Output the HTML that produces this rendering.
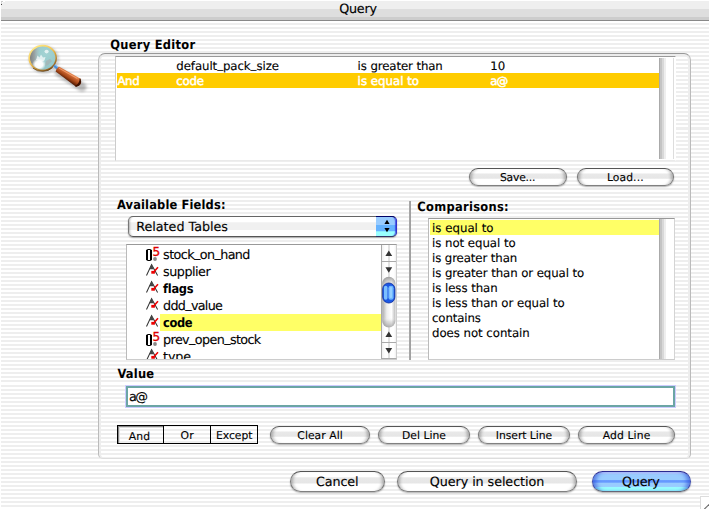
<!DOCTYPE html>
<html><head><meta charset="utf-8"><title>Query</title>
<style>
html,body{margin:0;padding:0;background:#fff;}
body{width:710px;height:509px;position:relative;overflow:hidden;font-family:"DejaVu Sans", "Liberation Sans", sans-serif;}
#win{position:absolute;left:1px;top:1px;width:708px;height:508px;background:#fff;}
.ps{position:absolute;left:1px;width:708px;background-image:linear-gradient(to bottom,#eee 0,#eee 50%,#fff 50%,#fff 100%);background-size:100% 4px;}
#tb{position:absolute;left:1px;top:1px;width:708px;height:19px;background:linear-gradient(to bottom,#efefef 0,#efefef 8px,#dedede 8px,#dedede 16px,#cdcdcd 16px,#cdcdcd 19px);border-bottom:1px solid #888;}
.t{position:absolute;white-space:pre;line-height:1;color:#000;text-rendering:geometricPrecision;-webkit-text-stroke:0.12px currentColor;font-family:"DejaVu Sans", "Liberation Sans", sans-serif;}
.t.b{font-family:"DejaVu Sans Condensed", "DejaVu Sans", "Liberation Sans", sans-serif;font-weight:bold;-webkit-text-stroke-width:0;}
.u{position:relative;top:-0.15em;}
.abs{position:absolute;}
#grp{position:absolute;left:98px;top:53px;width:593px;height:406px;box-sizing:border-box;border:1px solid #bbb;border-top-color:#999;border-bottom-color:#ccc;border-bottom-color:#ddd;border-radius:7px 7px 5px 5px;box-shadow:inset 2px 0 0 #ededed, inset -2px 0 0 #ededed, inset 0 2px 0 #ececec, inset 0 -1px 0 #f0f0f0;}
.list{position:absolute;box-sizing:border-box;background:#fff;border:1px solid #ccc;border-top-color:#999;overflow:hidden;}
.track{position:absolute;background:linear-gradient(to right,#aaa 0,#aaa 1px,#c4c4c4 1px,#c4c4c4 3px,#d8d8d8 3px,#d8d8d8 5px,#eee 5px,#eee 7px,#fff 7px);}
.btn{position:absolute;box-sizing:border-box;border:1px solid #777;border-top-color:#555;border-bottom-color:#808080;border-radius:11px;
 background:linear-gradient(to bottom,#fff 0,#fff 26%,#e9e9e9 30%,#e6e6e6 58%,#fff 63%,#fff 100%);
 box-shadow:0 1px 1.5px rgba(0,0,0,.3), inset 4px 0 3px -2px rgba(0,0,0,.25), inset -4px 0 3px -2px rgba(0,0,0,.25);}
.btn.def{border-color:#3a4ab0;border-top-color:#2a2a90;border-bottom-color:#667;background:linear-gradient(to bottom,#c6d2ff 0,#b0ccff 8%,#99ccff 14%,#99ccff 42%,#6699ff 45%,#6699ff 54%,#99ccff 58%,#99ccff 76%,#99ffff 82%,#99ffff 100%);
 box-shadow:0 1px 1.5px rgba(0,0,0,.3), inset 5px 0 4px -2px rgba(40,70,210,.6), inset -5px 0 4px -2px rgba(40,70,210,.6);}
.ic{position:absolute;overflow:visible;}
.seg{position:absolute;top:425px;height:19px;box-sizing:border-box;border:1px solid #000;}
</style></head>
<body>
<div id="win"></div>
<div class="ps" style="top:1px;height:128px;background-position:0 2px"></div>
<div class="ps" style="top:129px;height:1px;background:#eee"></div>
<div class="ps" style="top:130px;height:254px;background-position:0 2px"></div>
<div class="ps" style="top:384px;height:125px;background-position:0 1px"></div>
<div id="tb"></div>
<div class="abs" style="left:1px;top:1px;width:2px;height:1px;background:#ccc"></div>
<div class="abs" style="left:3px;top:1px;width:2px;height:1px;background:#fff"></div>
<div class="abs" style="left:1px;top:2px;width:1px;height:2px;background:#d8d8d8"></div>
<div class="abs" style="left:2px;top:2px;width:1px;height:1px;background:#fff"></div>
<div class="abs" style="left:1px;top:4px;width:1px;height:1px;background:#444"></div>

<!-- magnifier -->
<svg class="abs" style="left:20px;top:36px" width="70" height="60" viewBox="20 36 70 60">
<defs>
<radialGradient id="gl" cx="0.62" cy="0.32" r="0.8"><stop offset="0" stop-color="#a3d3d3"/><stop offset="0.7" stop-color="#94c8ca"/><stop offset="1" stop-color="#9bb"/></radialGradient>
<radialGradient id="hl" cx="0.5" cy="0.5" r="0.5"><stop offset="0" stop-color="#fff"/><stop offset="0.55" stop-color="#fff" stop-opacity="0.95"/><stop offset="1" stop-color="#fff" stop-opacity="0"/></radialGradient>
<linearGradient id="gy" x1="0" y1="0" x2="1" y2="0"><stop offset="0" stop-color="#777"/><stop offset="0.5" stop-color="#999" stop-opacity="0.8"/><stop offset="1" stop-color="#bbb" stop-opacity="0"/></linearGradient>
<linearGradient id="rim" x1="0.2" y1="0.05" x2="0.8" y2="0.95"><stop offset="0" stop-color="#ffe880"/><stop offset="0.45" stop-color="#f0c050"/><stop offset="1" stop-color="#8a5a20"/></linearGradient>
<linearGradient id="hd" x1="0" y1="0" x2="0" y2="1"><stop offset="0" stop-color="#e88a50"/><stop offset="0.25" stop-color="#d06c38"/><stop offset="0.6" stop-color="#a84818"/><stop offset="1" stop-color="#4a1602"/></linearGradient>
<filter id="bl" x="-30%" y="-30%" width="160%" height="160%"><feGaussianBlur stdDeviation="1.4"/></filter>
<clipPath id="lc"><ellipse cx="42.7" cy="58.1" rx="13" ry="12"/></clipPath>
</defs>
<g filter="url(#bl)" opacity="0.26"><ellipse cx="44" cy="59.6" rx="13.4" ry="12.3" fill="none" stroke="#000" stroke-width="2.5"/><path d="M59 72 L82 87" stroke="#000" stroke-width="9" stroke-linecap="round"/></g>
<ellipse cx="42.7" cy="58.1" rx="13" ry="12" fill="url(#gl)"/>
<g clip-path="url(#lc)">
<rect x="29" y="44" width="11" height="28" fill="url(#gy)"/>
<ellipse cx="39" cy="64.4" rx="7" ry="6" fill="url(#hl)"/>
<path d="M36 60 L37.5 55.5 L39.5 57.5 L41 54.5 L43 57.5 L45.5 57 L44.5 60.5 L41 62 Z" fill="#fff" opacity="0.7"/>
<ellipse cx="46.6" cy="51.6" rx="2.1" ry="1.8" fill="#fff" opacity="0.7"/>
<path d="M46 61 L50 59 L52 61 L48 65 L45 66 Z" fill="#aaa" opacity="0.55"/>
</g>
<ellipse cx="42.7" cy="58.1" rx="13.5" ry="12.45" fill="none" stroke="url(#rim)" stroke-width="1.6"/>
<path d="M33 68.2 A14.3 13.2 0 0 0 52.5 67.6" fill="none" stroke="#5a3a10" stroke-width="0.9" opacity="0.75"/>
<path d="M54.2 65.3 L58.8 69.5" stroke="#4a8fd8" stroke-width="3"/>
<path d="M54.9 64.5 L59.5 68.7" stroke="#a4ccf4" stroke-width="1"/>
<g transform="translate(57.3,69.0) rotate(32.6)"><path d="M0 -2.9 L24.8 -4.4 Q30.3 0 25.3 4.8 L0 3.1 Q-1 0 0 -2.9 Z" fill="url(#hd)"/><path d="M23.8 -4.3 Q26.6 0 24 4.7 L25.3 4.8 Q30.3 0 24.8 -4.4 Z" fill="#3e1202"/><path d="M1 -1.6 L22 -2.8" stroke="#ffb080" stroke-width="0.9" opacity="0.7"/></g>
</svg>

<div id="grp"></div>

<!-- top list -->
<div class="list" style="left:115px;top:56px;width:561px;height:105px;border-bottom-color:#eaeaea;border-right-color:#fff"></div>
<div class="abs" style="left:117px;top:73px;width:542px;height:15px;background:#ffcc00"></div>
<div class="track" style="left:659px;top:58px;width:14px;height:101px"></div>
<div class="abs" style="left:673px;top:58px;width:1px;height:101px;background:#ddd"></div>
<div class="btn " style="left:469px;top:168px;width:98px;height:18px"></div>
<div class="btn " style="left:577px;top:168px;width:97px;height:18px"></div>

<!-- popup -->
<div class="abs" id="pop" style="left:128px;top:216px;width:269px;height:21px;box-sizing:border-box;border:1px solid #777;border-top-color:#666;border-bottom-color:#555;border-radius:5px;background:linear-gradient(to bottom,#fff 0,#fff 26%,#f0f0f0 30%,#f0f0f0 66%,#fff 70%,#fff 100%);box-shadow:0 1px 1.5px rgba(0,0,0,.3), inset 3px 0 2px -2px rgba(0,0,0,.25);"></div>
<div class="abs" style="left:376px;top:216px;width:21px;height:21px;box-sizing:border-box;border:1px solid #33c;border-top-color:#006;border-left:0;border-bottom-color:#336;border-radius:0 5px 5px 0;background:linear-gradient(to bottom,#99ccff 0,#99ccff 42%,#66b3ff 44%,#66b3ff 72%,#99ffff 78%,#99ffff 100%);box-shadow:inset -2px 0 1px -1px rgba(40,40,220,.7)"></div>
<svg class="abs" style="left:376px;top:216px" width="21" height="21" viewBox="0 0 21 21"><path d="M11 3.8 L13.6 7.9 L8.4 7.9 Z M8.4 12.1 L13.6 12.1 L11 16.2 Z" fill="#000"/></svg>

<!-- fields list -->
<div class="list" style="left:126px;top:244px;width:271px;height:116px;border-left-color:#bbb;border-bottom-color:#ccc"></div>
<div class="abs" style="left:160px;top:314px;width:221px;height:17px;background:#ffff66"></div>
<div class="abs" style="left:127px;top:245px;width:254px;height:114px;overflow:hidden">
<div class="abs" style="left:-127px;top:-245px">
<svg class="ic" style="left:145px;top:246px" width="16" height="17" viewBox="0 0 16 17">
<rect x="1.5" y="3.5" width="5" height="11" rx="1.2" fill="none" stroke="#000" stroke-width="1"/>
<rect x="1" y="4" width="2" height="10" fill="#000"/><rect x="5" y="4" width="2" height="10" fill="#000"/>
<text x="7.4" y="9.6" font-family="DejaVu Sans, Liberation Sans, sans-serif" font-size="12" fill="#d00" stroke="#d00" stroke-width="0.35">5</text>
<circle cx="10" cy="13" r="1.9" fill="#888"/>
</svg>
<svg class="ic" style="left:145px;top:263px" width="16" height="17" viewBox="0 0 16 17">
<path d="M1.5 12.5 L6.6 1.6 L12.6 12.4" fill="none" stroke="#333" stroke-width="1.05" stroke-linejoin="miter"/>
<path d="M6.4 1.6 L4.4 6.2 L9.0 6.2 Z" fill="#444"/>
<rect x="6.3" y="7.9" width="3.6" height="2.8" fill="#e00"/>
<path d="M8 9.8 L13 4.3" stroke="#e00" stroke-width="1.6" fill="none"/>
</svg>
<svg class="ic" style="left:145px;top:280px" width="16" height="17" viewBox="0 0 16 17">
<path d="M1.5 12.5 L6.6 1.6 L12.6 12.4" fill="none" stroke="#333" stroke-width="1.05" stroke-linejoin="miter"/>
<path d="M6.4 1.6 L4.4 6.2 L9.0 6.2 Z" fill="#444"/>
<rect x="6.3" y="7.9" width="3.6" height="2.8" fill="#e00"/>
<path d="M8 9.8 L13 4.3" stroke="#e00" stroke-width="1.6" fill="none"/>
</svg>
<svg class="ic" style="left:145px;top:297px" width="16" height="17" viewBox="0 0 16 17">
<path d="M1.5 12.5 L6.6 1.6 L12.6 12.4" fill="none" stroke="#333" stroke-width="1.05" stroke-linejoin="miter"/>
<path d="M6.4 1.6 L4.4 6.2 L9.0 6.2 Z" fill="#444"/>
<rect x="6.3" y="7.9" width="3.6" height="2.8" fill="#e00"/>
<path d="M8 9.8 L13 4.3" stroke="#e00" stroke-width="1.6" fill="none"/>
</svg>
<svg class="ic" style="left:145px;top:314px" width="16" height="17" viewBox="0 0 16 17">
<path d="M1.5 12.5 L6.6 1.6 L12.6 12.4" fill="none" stroke="#333" stroke-width="1.05" stroke-linejoin="miter"/>
<path d="M6.4 1.6 L4.4 6.2 L9.0 6.2 Z" fill="#444"/>
<rect x="6.3" y="7.9" width="3.6" height="2.8" fill="#e00"/>
<path d="M8 9.8 L13 4.3" stroke="#e00" stroke-width="1.6" fill="none"/>
</svg>
<svg class="ic" style="left:145px;top:331px" width="16" height="17" viewBox="0 0 16 17">
<rect x="1.5" y="3.5" width="5" height="11" rx="1.2" fill="none" stroke="#000" stroke-width="1"/>
<rect x="1" y="4" width="2" height="10" fill="#000"/><rect x="5" y="4" width="2" height="10" fill="#000"/>
<text x="7.4" y="9.6" font-family="DejaVu Sans, Liberation Sans, sans-serif" font-size="12" fill="#d00" stroke="#d00" stroke-width="0.35">5</text>
<circle cx="10" cy="13" r="1.9" fill="#888"/>
</svg>
<svg class="ic" style="left:145px;top:348px" width="16" height="17" viewBox="0 0 16 17">
<path d="M1.5 12.5 L6.6 1.6 L12.6 12.4" fill="none" stroke="#333" stroke-width="1.05" stroke-linejoin="miter"/>
<path d="M6.4 1.6 L4.4 6.2 L9.0 6.2 Z" fill="#444"/>
<rect x="6.3" y="7.9" width="3.6" height="2.8" fill="#e00"/>
<path d="M8 9.8 L13 4.3" stroke="#e00" stroke-width="1.6" fill="none"/>
</svg>

<span class="t fl" style="left:163.10px;top:250.00px;font-size:12.74px;letter-spacing:-0.594px;">stock<span class="u">_</span>on<span class="u">_</span>hand</span>
<span class="t fl" style="left:163.10px;top:267.00px;font-size:12.74px;letter-spacing:-0.491px;">supplier</span>
<span class="t b fl" style="left:163.10px;top:284.00px;font-size:12.74px;letter-spacing:-0.310px;">flags</span>
<span class="t fl" style="left:163.10px;top:301.00px;font-size:12.74px;letter-spacing:-0.701px;">ddd<span class="u">_</span>value</span>
<span class="t b fl" style="left:163.10px;top:318.00px;font-size:12.74px;letter-spacing:-0.410px;">code</span>
<span class="t fl" style="left:163.10px;top:335.00px;font-size:12.74px;letter-spacing:-0.615px;">prev<span class="u">_</span>open<span class="u">_</span>stock</span>
<span class="t fl" style="left:163.10px;top:352.00px;font-size:12.74px;letter-spacing:-0.185px;">type</span>
</div></div>

<!-- scrollbar -->
<div class="abs" id="sb" style="left:381px;top:245px;width:16px;height:114px;box-sizing:border-box;border-left:1px solid #aaa;border-right:1px solid #ccc;border-bottom:1px solid #aaa;background:linear-gradient(to right,#f0f0f0 0,#fff 3px,#fff 6px,#e2e2e2 6px,#e2e2e2 8.5px,#fff 8.5px,#fff 12px,#f0f0f0 14px)"></div>
<div class="abs" style="left:382px;top:261px;width:14px;height:1px;background:#aaa"></div>
<div class="abs" style="left:382px;top:342px;width:14px;height:1px;background:#aaa"></div>
<svg class="abs" style="left:381px;top:245px" width="16" height="113" viewBox="0 0 16 113">
<path d="M7.8 5.5 L11.2 10.9 L4.4 10.9 Z" fill="#333"/>
<path d="M4.4 22.3 L11.2 22.3 L7.8 27.7 Z" fill="#333"/>
<path d="M7.8 86.5 L11.2 91.9 L4.4 91.9 Z" fill="#333"/>
<path d="M4.4 103.1 L11.2 103.1 L7.8 108.5 Z" fill="#333"/>
<defs><linearGradient id="cap" x1="0" x2="1" y1="0" y2="0"><stop offset="0" stop-color="#aaa"/><stop offset="0.35" stop-color="#eee"/><stop offset="0.7" stop-color="#fff"/><stop offset="1" stop-color="#bbb"/></linearGradient>
<linearGradient id="capv" x1="0" x2="0" y1="0" y2="1"><stop offset="0" stop-color="#777" stop-opacity="0.7"/><stop offset="0.12" stop-color="#999" stop-opacity="0.25"/><stop offset="0.2" stop-color="#fff" stop-opacity="0"/><stop offset="0.8" stop-color="#fff" stop-opacity="0"/><stop offset="0.88" stop-color="#999" stop-opacity="0.25"/><stop offset="1" stop-color="#777" stop-opacity="0.6"/></linearGradient>
<linearGradient id="th" x1="0" x2="1" y1="0" y2="0"><stop offset="0" stop-color="#0a30c0"/><stop offset="0.18" stop-color="#2060e0"/><stop offset="0.32" stop-color="#70b8ff"/><stop offset="0.5" stop-color="#3a80f0"/><stop offset="0.68" stop-color="#70b8ff"/><stop offset="0.82" stop-color="#2060e0"/><stop offset="1" stop-color="#0a30c0"/></linearGradient></defs>
<rect x="1.2" y="31.8" width="13.2" height="50.6" rx="6.6" fill="url(#cap)"/>
<rect x="1.2" y="31.8" width="13.2" height="50.6" rx="6.6" fill="url(#capv)"/>
<rect x="1.7" y="38.0" width="12.2" height="20" rx="6" fill="#1c58e4" stroke="#0a2a9a" stroke-width="0.8"/>
<rect x="2.9" y="40.8" width="3.6" height="14" rx="1.8" fill="#7cc0ff"/>
<rect x="7.4" y="40.8" width="5.2" height="14" rx="2.4" fill="#70b8ff"/>
<rect x="8.6" y="42" width="2.4" height="11" rx="1" fill="#94d0ff"/>
</svg>

<!-- divider -->
<div class="abs" style="left:409px;top:201px;width:1px;height:159px;background:#a6a6a6"></div>
<div class="abs" style="left:410px;top:201px;width:1px;height:159px;background:#a0a0a0"></div>

<!-- comparisons -->
<div class="list" style="left:428px;top:218px;width:247px;height:142px;border-left-color:#bbb;border-right-color:#d4d4d4;border-bottom-color:#ccc"></div>
<div class="abs" style="left:430px;top:220px;width:229px;height:15px;background:#ffff66"></div>
<div class="track" style="left:659px;top:219px;width:15px;height:140px"></div>

<!-- value field -->
<div class="abs" style="left:125px;top:385px;width:551px;height:23px;box-sizing:border-box;border:1px solid #ccccff;background:#fff"><div style="box-sizing:border-box;width:100%;height:100%;border:2px solid #6ba5a5"></div></div>

<!-- segmented -->
<div class="seg" style="left:117px;width:47px;box-shadow:inset 1px 1px 0 #888, inset 2px 2px 0 #ddd"></div>
<div class="seg" style="left:163px;width:48px"></div>
<div class="seg" style="left:210px;width:48px"></div>

<div class="btn " style="left:270px;top:426px;width:100px;height:18px"></div>
<div class="btn " style="left:378px;top:426px;width:92px;height:18px"></div>
<div class="btn " style="left:478px;top:426px;width:92px;height:18px"></div>
<div class="btn " style="left:578px;top:426px;width:97px;height:18px"></div>

<div class="btn " style="left:290px;top:471px;width:95px;height:21px"></div>
<div class="btn " style="left:397px;top:471px;width:180px;height:21px"></div>
<div class="btn def" style="left:592px;top:471px;width:99px;height:21px"></div>

<!-- resize box -->
<div class="abs" style="left:700px;top:496px;width:9px;height:13px;background:#fff;border-left:1px solid #ddd;border-top:1px solid #ddd;box-sizing:border-box"></div>
<svg class="abs" style="left:700px;top:496px" width="9" height="13" viewBox="0 0 9 13"><path d="M4.3 13.2 L9.2 8.3" stroke="#6a6a6a" stroke-width="1.1"/></svg>

<span class="t" style="left:339.20px;top:4.10px;font-size:12.74px;letter-spacing:-0.221px;">Query</span>
<span class="t b" style="left:110.20px;top:39.60px;font-size:12.74px;letter-spacing:0.289px;">Query Editor</span>
<span class="t" style="left:176.30px;top:61.00px;font-size:11.76px;letter-spacing:-0.071px;">default<span class="u">_</span>pack<span class="u">_</span>size</span>
<span class="t" style="left:357.60px;top:61.00px;font-size:11.76px;letter-spacing:-0.106px;">is greater than</span>
<span class="t" style="left:490.20px;top:61.00px;font-size:11.76px;letter-spacing:0.123px;">10</span>
<span class="t" style="left:117.40px;top:76.00px;font-size:11.76px;letter-spacing:-0.318px;color:#fff;-webkit-text-stroke-width:0.5px;">And</span>
<span class="t" style="left:176.30px;top:76.00px;font-size:11.76px;letter-spacing:-0.211px;color:#fff;-webkit-text-stroke-width:0.5px;">code</span>
<span class="t" style="left:357.60px;top:76.00px;font-size:11.76px;letter-spacing:0.021px;color:#fff;-webkit-text-stroke-width:0.5px;">is equal to</span>
<span class="t" style="left:490.20px;top:76.00px;font-size:11.76px;letter-spacing:-0.877px;color:#fff;-webkit-text-stroke-width:0.5px;">a@</span>
<span class="t" style="left:500.00px;top:173.40px;font-size:10.78px;letter-spacing:-0.215px;">Save...</span>
<span class="t" style="left:606.90px;top:173.40px;font-size:10.78px;letter-spacing:0.101px;">Load...</span>
<span class="t b" style="left:117.00px;top:199.60px;font-size:12.74px;letter-spacing:0.146px;">Available Fields:</span>
<span class="t b" style="left:417.30px;top:201.80px;font-size:12.74px;letter-spacing:0.301px;">Comparisons:</span>
<span class="t" style="left:136.20px;top:221.80px;font-size:12.74px;letter-spacing:-0.013px;">Related Tables</span>
<span class="t" style="left:432.00px;top:223.00px;font-size:11.76px;letter-spacing:0.021px;">is equal to</span>
<span class="t" style="left:432.00px;top:238.00px;font-size:11.76px;letter-spacing:-0.036px;">is not equal to</span>
<span class="t" style="left:432.00px;top:253.00px;font-size:11.76px;letter-spacing:-0.106px;">is greater than</span>
<span class="t" style="left:432.00px;top:268.00px;font-size:11.76px;letter-spacing:-0.078px;">is greater than or equal to</span>
<span class="t" style="left:432.00px;top:283.00px;font-size:11.76px;letter-spacing:-0.058px;">is less than</span>
<span class="t" style="left:432.00px;top:298.00px;font-size:11.76px;letter-spacing:-0.051px;">is less than or equal to</span>
<span class="t" style="left:432.00px;top:313.00px;font-size:11.76px;letter-spacing:-0.131px;">contains</span>
<span class="t" style="left:432.00px;top:328.00px;font-size:11.76px;letter-spacing:-0.039px;">does not contain</span>
<span class="t b" style="left:117.40px;top:368.80px;font-size:12.74px;letter-spacing:0.247px;">Value</span>
<span class="t" style="left:129.00px;top:391.60px;font-size:12.74px;letter-spacing:-1.473px;">a@</span>
<span class="t" style="left:128.80px;top:431.90px;font-size:10.78px;letter-spacing:0.190px;">And</span>
<span class="t" style="left:180.40px;top:430.90px;font-size:10.78px;letter-spacing:0.347px;">Or</span>
<span class="t" style="left:216.00px;top:430.90px;font-size:10.78px;letter-spacing:-0.032px;">Except</span>
<span class="t" style="left:297.30px;top:431.00px;font-size:10.78px;letter-spacing:0.062px;">Clear All</span>
<span class="t" style="left:402.00px;top:431.00px;font-size:10.78px;letter-spacing:0.029px;">Del Line</span>
<span class="t" style="left:495.80px;top:431.00px;font-size:10.78px;letter-spacing:-0.032px;">Insert Line</span>
<span class="t" style="left:602.70px;top:431.00px;font-size:10.78px;letter-spacing:0.125px;">Add Line</span>
<span class="t" style="left:316.10px;top:476.90px;font-size:12.74px;letter-spacing:-0.157px;">Cancel</span>
<span class="t" style="left:429.80px;top:476.90px;font-size:12.74px;letter-spacing:-0.070px;">Query in selection</span>
<span class="t" style="left:622.00px;top:476.90px;font-size:12.74px;letter-spacing:-0.221px;">Query</span>
</body></html>
